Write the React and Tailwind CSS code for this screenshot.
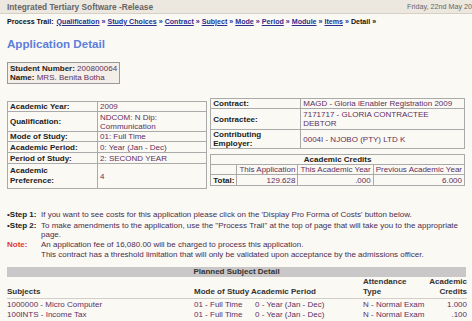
export default function App() {
  const trail = ["Qualification", "Study Choices", "Contract", "Subject", "Mode", "Period", "Module", "Items"];
  const val = "text-[#5e2f60]";
  const lbl = "font-bold text-[#222]";
  const cell = "border border-[#aaa] px-[2px] py-0 align-middle";

  return (
    <div className="w-[472px] h-[321px] overflow-hidden bg-[#fbf9f4] text-[8px] leading-[10px] font-['Liberation_Sans',Arial,sans-serif]">
      {/* top bar */}
      <div className="flex items-center h-[14px] bg-[#ece7df] border-b border-[#d6cfc4] pl-[7px]">
        <div className="font-bold text-[#666] text-[8.3px]">Integrated Tertiary Software -Release</div>
        <div className="ml-auto whitespace-nowrap text-[#666] text-[7.2px]">Friday, 22nd May 20</div>
      </div>

      {/* process trail */}
      <div className="px-[7px] mt-[2px] h-[11px] flex items-center whitespace-nowrap text-[7.1px] font-bold">
        <span className="text-[#111] mr-[3px]">Process Trail:</span>
        {trail.map((t) => (
          <span key={t} className="text-[#2b2f90] mr-[2px]">
            <span className="underline">{t}</span>
            <span> »</span>
          </span>
        ))}
        <span className="text-[#111]">Detail »</span>
      </div>

      <div className="px-[7px] mt-[10px] text-[11.6px] leading-[14px] font-bold text-[#5b7fdb]">Application Detail</div>

      {/* student box */}
      <div className="ml-[7px] mt-[11px] w-fit whitespace-nowrap border border-[#999] bg-[#f3efe8] px-[2px] py-[1px] leading-[9px]">
        <div><span className={lbl}>Student Number: </span><span className={val}>200800064</span></div>
        <div><span className={lbl}>Name: </span><span className={val}>MRS. Benita Botha</span></div>
      </div>

      {/* detail tables */}
      <div className="flex items-start gap-[3px] px-[7px] mt-[14px]">
        <table className="w-[208px] mt-[3px] border-collapse border border-[#888] leading-[9px]">
          <tbody>
            <tr className="h-[10px]"><td className={`${cell} ${lbl} w-[90px]`}>Academic Year:</td><td className={`${cell} ${val}`}>2009</td></tr>
            <tr className="h-[20px]"><td className={`${cell} ${lbl}`}>Qualification:</td><td className={`${cell} ${val}`}>NDCOM: N Dip:<br />Communication</td></tr>
            <tr className="h-[10px]"><td className={`${cell} ${lbl}`}>Mode of Study:</td><td className={`${cell} ${val}`}>01: Full Time</td></tr>
            <tr className="h-[11px]"><td className={`${cell} ${lbl}`}>Academic Period:</td><td className={`${cell} ${val}`}>0: Year (Jan - Dec)</td></tr>
            <tr className="h-[11px]"><td className={`${cell} ${lbl}`}>Period of Study:</td><td className={`${cell} ${val}`}>2: SECOND YEAR</td></tr>
            <tr className="h-[25px]"><td className={`${cell} ${lbl} leading-[10px]`}>Academic<br />Preference:</td><td className={`${cell} ${val}`}>4</td></tr>
          </tbody>
        </table>

        <div className="flex-1">
          <table className="w-full border-collapse border border-[#888] leading-[9px]">
            <tbody>
              <tr className="h-[10px]"><td className={`${cell} ${lbl} w-[90px]`}>Contract:</td><td className={`${cell} ${val}`}>MAGD - Gloria iEnabler Registration 2009</td></tr>
              <tr className="h-[21px]"><td className={`${cell} ${lbl}`}>Contractee:</td><td className={`${cell} ${val}`}>7171717 - GLORIA CONTRACTEE<br />DEBTOR</td></tr>
              <tr className="h-[19px]"><td className={`${cell} ${lbl}`}>Contributing<br />Employer:</td><td className={`${cell} ${val}`}>0004I - NJOBO (PTY) LTD K</td></tr>
            </tbody>
          </table>
          <table className="w-full mt-[5px] border-collapse border border-[#888] leading-[9px]">
            <tbody>
              <tr className="h-[10px]"><td colSpan={4} className={`${cell} ${lbl} text-center`}>Academic Credits</td></tr>
              <tr className="h-[10px] text-[#5e2f60]">
                <td className={`${cell} w-[26px]`}></td>
                <td className={`${cell} w-[61px] whitespace-nowrap`}>This Application</td>
                <td className={`${cell} w-[77px] whitespace-nowrap`}>This Academic Year</td>
                <td className={`${cell} whitespace-nowrap`}>Previous Academic Year</td>
              </tr>
              <tr className="h-[11px]">
                <td className={`${cell} ${lbl}`}>Total:</td>
                <td className={`${cell} ${val} text-right`}>129.628</td>
                <td className={`${cell} ${val} text-right`}>.000</td>
                <td className={`${cell} ${val} text-right`}>6.000</td>
              </tr>
            </tbody>
          </table>
        </div>
      </div>

      {/* steps */}
      <div className="px-[7px] mt-[21px] text-[#4a2d4e] leading-[9.6px]">
        <div className="flex">
          <div className="w-[34px] shrink-0 text-[#222]">•<span className="font-bold">Step 1:</span></div>
          <div>If you want to see costs for this application please click on the 'Display Pro Forma of Costs' button below.</div>
        </div>
        <div className="flex mt-[1px]">
          <div className="w-[34px] shrink-0 text-[#222]">•<span className="font-bold">Step 2:</span></div>
          <div>To make amendments to the application, use the "Process Trail" at the top of page that will take you to the appropriate page.</div>
        </div>
        <div className="flex mt-[0.5px]">
          <div className="w-[34px] shrink-0 font-bold text-[#e23a2e]">Note:</div>
          <div>An application fee of 16,080.00 will be charged to process this application.<br />This contract has a threshold limitation that will only be validated upon acceptance by the admissions officer.</div>
        </div>
      </div>

      {/* planned subject detail */}
      <div className="mx-[7px] mt-[8px] w-[459px] h-[10px] bg-[#c9c7c7] text-center font-bold text-[#333] leading-[10px]">Planned Subject Detail</div>

      <div className="mx-[7px] w-[460px] grid grid-cols-[187px_57px_112px_1fr_auto] leading-[10px]">
        <div className="font-bold text-[#333] self-end">Subjects</div>
        <div className="font-bold text-[#333] self-end whitespace-nowrap">Mode of Study</div>
        <div className="font-bold text-[#333] self-end">Academic Period</div>
        <div className="font-bold text-[#333] self-end">Attendance<br />Type</div>
        <div className="font-bold text-[#333] self-end text-right">Academic<br />Credits</div>
        <div className="col-span-5 border-b border-[#d2cfcb] mt-[1px] mb-[1px]"></div>
        <div className={val}>1000000 - Micro Computer</div>
        <div className={`${val} whitespace-nowrap`}>01 - Full Time</div>
        <div className={`${val} pl-[4px]`}>0 - Year (Jan - Dec)</div>
        <div className={val}>N - Normal Exam</div>
        <div className={`${val} text-right`}>1.000</div>
        <div className={val}>100INTS - Income Tax</div>
        <div className={`${val} whitespace-nowrap`}>01 - Full Time</div>
        <div className={`${val} pl-[4px]`}>0 - Year (Jan - Dec)</div>
        <div className={val}>N - Normal Exam</div>
        <div className={`${val} text-right`}>.100</div>
      </div>
    </div>
  );
}
